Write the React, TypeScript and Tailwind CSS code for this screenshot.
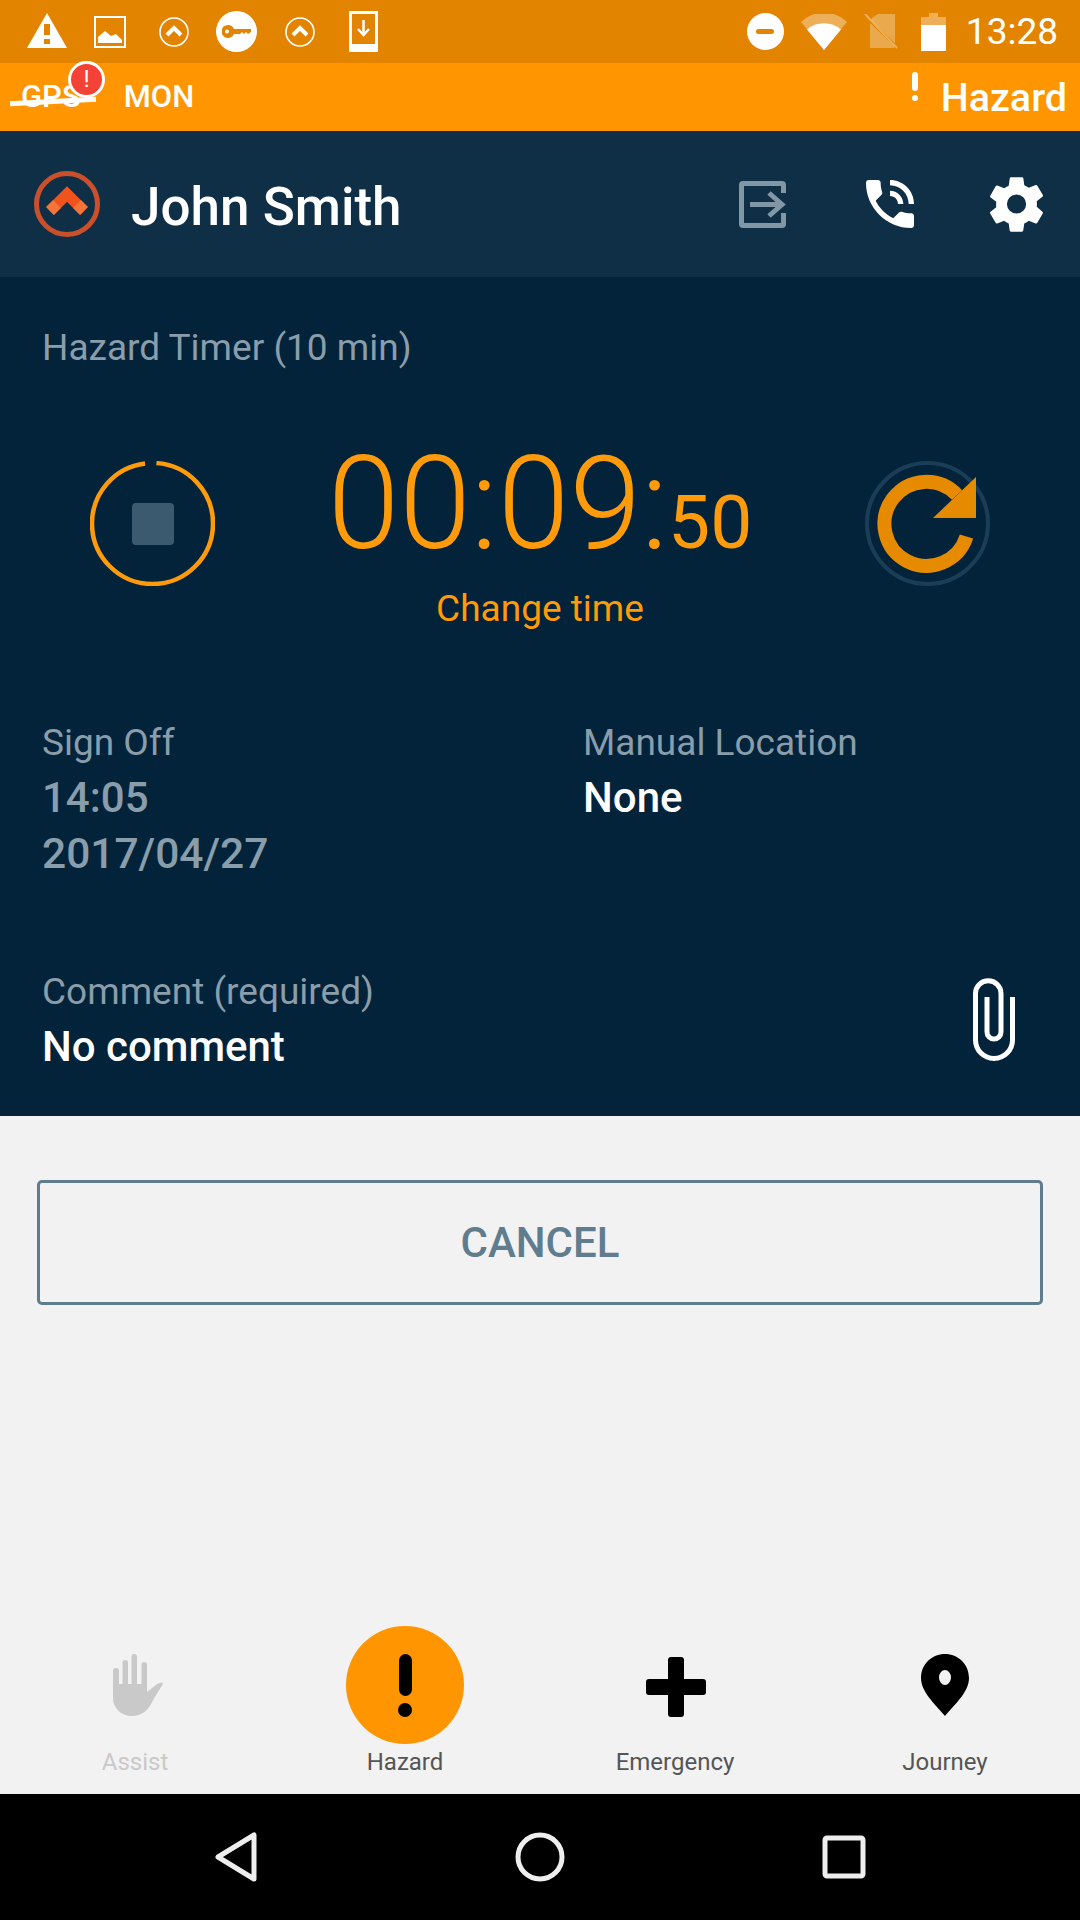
const roboto = { fontFamily: 'Roboto, "Liberation Sans", sans-serif' };

function ChevronCircle() {
  return (
    <svg width="30" height="30" viewBox="0 0 30 30" fill="none" stroke="#fff">
      <circle cx="15" cy="15" r="14" strokeWidth="1.6" />
      <path d="M8 18 L15 11 L22 18" strokeWidth="4" />
    </svg>
  );
}

function StatusBar() {
  return (
    <div className="flex h-[63px] items-center bg-[#e38400] pl-[27px] pr-[22px]">
      <svg width="40" height="36" viewBox="0 0 40 36" className="mt-[-3px]">
        <path d="M20 1 L40 36 L0 36 Z" fill="#fff" />
        <rect x="17" y="12" width="6" height="11" fill="#e38400" />
        <rect x="17" y="27" width="6" height="5" fill="#e38400" />
      </svg>
      <svg width="32" height="32" viewBox="0 0 32 32" className="ml-[27px]">
        <rect x="1" y="1" width="30" height="30" fill="none" stroke="#fff" strokeWidth="2" />
        <path d="M4 27 L4 21 L11 15 L17 20 L22 18 L28 24 L28 27 Z" fill="#fff" />
      </svg>
      <div className="ml-[33px] flex">
        <ChevronCircle />
      </div>
      <div className="ml-[27px] flex h-[41px] w-[41px] items-center justify-center rounded-full bg-white">
        <svg width="29" height="13" viewBox="0 0 29 13">
          <path d="M6 0 A6.5 6.5 0 0 1 12 4 L29 4 L29 7 L26 9 L24 7 L22 9 L20 7 L18 9 L12 9 A6.5 6.5 0 1 1 6 0 Z" fill="#e38400" />
          <circle cx="5" cy="6.5" r="2" fill="#fff" />
        </svg>
      </div>
      <div className="ml-[28px] flex">
        <ChevronCircle />
      </div>
      <svg width="29" height="41" viewBox="0 0 29 41" className="ml-[34px]">
        <path d="M0 0 H29 V41 H0 Z M3 3 V33 H26 V3 Z" fill="#fff" fillRule="evenodd" />
        <path d="M14.5 9 V23 M9 18 L14.5 24 L20 18" fill="none" stroke="#fff" strokeWidth="2.5" />
      </svg>

      <div className="ml-auto flex h-[37px] w-[37px] items-center justify-center rounded-full bg-white">
        <div className="h-[5px] w-[18px] rounded-sm bg-[#e38400]" />
      </div>
      <svg width="46" height="36" viewBox="0 0 46 36" className="ml-[17px]">
        <path d="M0 8 A33 33 0 0 1 46 8 L23 36 Z" fill="#fff" fillOpacity="0.35" />
        <path d="M6 15.5 A26 26 0 0 1 40 15.5 L23 36 Z" fill="#fff" />
      </svg>
      <svg width="35" height="35" viewBox="0 0 35 35" className="ml-[17px]">
        <path d="M8 4 L14 0 H31 V32 Q31 34 29 34 H6 V10 Z" fill="#fff" fillOpacity="0.3" />
        <path d="M1 2 L34 34" stroke="#e38400" strokeWidth="3" />
        <path d="M1 0 L33 34" stroke="#fff" strokeOpacity="0.35" strokeWidth="2" />
      </svg>
      <svg width="25" height="38" viewBox="0 0 25 38" className="ml-[22px]">
        <path d="M0 4 H8 V0 H17 V4 H25 V12 H0 Z" fill="#fff" fillOpacity="0.35" />
        <rect x="0" y="12" width="25" height="26" fill="#fff" />
      </svg>
      <div className="ml-[20px] text-[37px] leading-none text-white" style={roboto}>
        13:28
      </div>
    </div>
  );
}

function AlertBar() {
  return (
    <div className="flex h-[68px] items-center bg-[#ff9500] pr-[13px]">
      <div className="relative ml-[21px] mt-[-2px] text-[31px] font-medium leading-none text-white" style={roboto}>
        GPS
        <div className="absolute left-[-11px] top-[18px] h-[5px] w-[86px] -rotate-[3deg] bg-white" />
        <div className="absolute left-[47px] top-[-20px] flex h-[37px] w-[37px] items-center justify-center rounded-full border-[3px] border-white bg-[#f44336] text-[24px] font-normal">
          !
        </div>
      </div>
      <div className="ml-[43px] mt-[-2px] text-[31px] font-medium leading-none text-white" style={roboto}>
        MON
      </div>
      <div className="ml-auto mb-[22px] mr-[23px] flex flex-col items-center gap-[4px]">
        <div className="h-[19px] w-[6px] rounded-full bg-white" />
        <div className="h-[6px] w-[6px] rounded-full bg-white" />
      </div>
      <div className="mt-[2px] text-[39.5px] font-medium leading-none text-white" style={roboto}>
        Hazard
      </div>
    </div>
  );
}

function Header() {
  return (
    <div className="flex h-[146px] items-center bg-[#0f2f47] pl-[34px] pr-[31px]">
      <svg width="66" height="66" viewBox="0 0 66 66" fill="none">
        <circle cx="33" cy="33" r="30.5" stroke="#c9502a" strokeWidth="5" />
        <path d="M16 40 L33 23 L50 40" stroke="#f0531c" strokeWidth="11" />
        <path d="M16 40 L23 33 M50 40 L43 33" stroke="#f4743a" strokeWidth="11" />
      </svg>
      <div className="ml-[31px] mt-[7px] text-[53px] font-medium leading-none text-white" style={roboto}>
        John Smith
      </div>
      <svg width="47" height="47" viewBox="0 0 47 47" fill="none" className="ml-auto">
        <path d="M44.5 12 V4 Q44.5 2.5 43 2.5 H4 Q2.5 2.5 2.5 4 V43 Q2.5 44.5 4 44.5 H43 Q44.5 44.5 44.5 43 V32" stroke="#8197a6" strokeWidth="5" />
        <path d="M11 23.5 H43 M30 12 L43 23.5 L30 35" stroke="#8197a6" strokeWidth="5" />
      </svg>
      <svg width="64" height="64" viewBox="0 0 24 24" className="ml-[72px]">
        <path
          fill="#fff"
          d="M20 15.5c-1.25 0-2.45-.2-3.57-.57-.35-.11-.74-.03-1.02.24l-2.2 2.2c-2.83-1.44-5.15-3.75-6.59-6.59l2.2-2.21c.28-.26.36-.65.25-1C8.7 6.45 8.5 5.25 8.5 4c0-.55-.45-1-1-1H4c-.55 0-1 .45-1 1 0 9.39 7.61 17 17 17 .55 0 1-.45 1-1v-3.5c0-.55-.45-1-1-1zM19 12h2c0-4.97-4.03-9-9-9v2c3.87 0 7 3.13 7 7zm-4 0h2c0-2.76-2.24-5-5-5v2c1.66 0 3 1.34 3 3z"
        />
      </svg>
      <svg width="64" height="64" viewBox="0 0 24 24" className="ml-[63px]">
        <path
          fill="#fff"
          d="M19.4 13c.04-.32.06-.66.06-1s-.02-.68-.07-1l2.16-1.68c.2-.15.25-.43.13-.65l-2.05-3.54c-.12-.23-.39-.3-.62-.23l-2.55 1.03c-.53-.41-1.1-.75-1.72-1l-.38-2.71A.5.5 0 0 0 13.86 2H9.78c-.25 0-.46.18-.5.42L8.9 5.13c-.62.25-1.2.6-1.72 1L4.63 5.1c-.23-.08-.5 0-.62.23L1.96 8.87c-.12.22-.07.5.13.65L4.25 11.2c-.05.32-.09.67-.09 1s.02.68.07 1l-2.16 1.68c-.2.15-.25.43-.13.65l2.05 3.54c.12.23.39.3.62.23l2.55-1.03c.53.41 1.1.75 1.72 1l.38 2.71c.04.24.25.42.5.42h4.08c.25 0 .46-.18.5-.42l.38-2.71c.62-.25 1.2-.6 1.72-1l2.55 1.03c.23.08.5 0 .62-.23l2.05-3.54c.12-.22.07-.5-.13-.65L19.4 13zM11.82 15.6A3.6 3.6 0 1 1 11.82 8.4a3.6 3.6 0 0 1 0 7.2z"
        />
      </svg>
    </div>
  );
}

function Timer() {
  return (
    <div className="flex items-start">
      <div className="relative ml-[90px] mt-[55px] flex h-[125px] w-[125px] shrink-0 items-center justify-center">
        <svg width="125" height="125" viewBox="0 0 125 125" fill="none" className="absolute inset-0">
          <circle cx="62.5" cy="62.5" r="60.5" stroke="#ff9a0a" strokeWidth="4.5" strokeDasharray="368 12" strokeDashoffset="-4" transform="rotate(-90 62.5 62.5)" />
        </svg>
        <div className="h-[42px] w-[42px] rounded-[4px] bg-[#3b5a70]" />
      </div>
      <div className="flex flex-1 flex-col items-center">
        <div className="mt-[34px] flex items-baseline text-[#ff9a0a]" style={roboto}>
          <span className="text-[129px] font-light leading-[128px]">00:09:</span>
          <span className="text-[75px] leading-[128px]">50</span>
        </div>
        <div className="mt-[2px] text-[37px] leading-[42px] text-[#ff9a0a]" style={roboto}>
          Change time
        </div>
      </div>
      <svg width="125" height="125" viewBox="0 0 125 125" fill="none" className="mr-[90px] mt-[55px] shrink-0">
        <circle cx="62.5" cy="62.5" r="60.5" stroke="#1a3e57" strokeWidth="4" />
        <path d="M101.5 75.5 A42 42 0 1 1 92 34" stroke="#e68a00" strokeWidth="14" />
        <path d="M111 16 L111 57 L68 57 Z" fill="#e68a00" />
      </svg>
    </div>
  );
}

function Details() {
  return (
    <div className="flex-1 bg-[#02233a] pl-[42px]" style={roboto}>
      <div className="mt-[51px] text-[37px] leading-[40px] text-[#8a9dab]">Hazard Timer (10 min)</div>
      <div className="-ml-[42px] mt-[38px]">
        <Timer />
      </div>
      <div className="mt-[90px] flex">
        <div className="w-[541px]">
          <div className="text-[37px] leading-[46px] text-[#8a9dab]">Sign Off</div>
          <div className="mt-[9px] text-[42px] font-medium leading-[46px] text-[#8a9dab]">14:05</div>
          <div className="mt-[10px] text-[42.5px] font-medium leading-[46px] text-[#8a9dab]">2017/04/27</div>
        </div>
        <div>
          <div className="text-[37px] leading-[46px] text-[#8a9dab]">Manual Location</div>
          <div className="mt-[9px] text-[42px] font-medium leading-[46px] text-white">None</div>
        </div>
      </div>
      <div className="mt-[92px] flex items-center pr-[65px]">
        <div>
          <div className="text-[37px] leading-[46px] text-[#8a9dab]">Comment (required)</div>
          <div className="mt-[9px] text-[42px] font-medium leading-[46px] text-white">No comment</div>
        </div>
        <svg width="42" height="84" viewBox="0 0 42 84" fill="none" stroke="#fff" strokeWidth="5" className="ml-auto">
          <path d="M39.5 19 V62 A18.5 18.5 0 0 1 2.5 62 V15.5 A12.75 12.75 0 0 1 28 15.5 V54 A7 7 0 0 1 14 54 V19" />
        </svg>
      </div>
    </div>
  );
}

function TabLabel({ children, muted }: { children: string; muted?: boolean }) {
  return (
    <div className={`mt-[4px] text-[24px] leading-[28px] ${muted ? 'text-[#c9c9c9]' : 'text-[#555555]'}`} style={roboto}>
      {children}
    </div>
  );
}

function Tabs() {
  return (
    <div className="grid grid-cols-4 pb-[18px]">
      <div className="flex flex-col items-center">
        <div className="flex h-[118px] items-center justify-center">
          <svg width="50" height="62" viewBox="0 0 50 62" fill="#c9c9c9" className="ml-[6px]">
            <rect x="0" y="14" width="6" height="26" rx="3" />
            <rect x="9.5" y="6" width="5.5" height="30" rx="2.75" />
            <rect x="18.5" y="0" width="5.5" height="36" rx="2.75" />
            <rect x="28.5" y="8" width="5.5" height="30" rx="2.75" />
            <path d="M0 30 H34 V38 L43 31 C46 28.5 50 28 50 30 C47 35 42 42 38 50 C34 58 27 62 19 62 C8 62 0 54 0 44 Z" />
          </svg>
        </div>
        <TabLabel muted>Assist</TabLabel>
      </div>
      <div className="flex flex-col items-center">
        <div className="flex h-[118px] w-[118px] flex-col items-center justify-center gap-[7px] rounded-full bg-[#ff9500]">
          <div className="h-[42px] w-[13px] rounded-full bg-black" />
          <div className="h-[14px] w-[14px] rounded-full bg-black" />
        </div>
        <TabLabel>Hazard</TabLabel>
      </div>
      <div className="flex flex-col items-center">
        <div className="flex h-[118px] items-center justify-center">
          <svg width="60" height="60" viewBox="0 0 60 60" fill="#000" className="ml-[2px] mt-[3px]">
            <rect x="22" y="0" width="16" height="60" rx="3" />
            <rect x="0" y="22" width="60" height="16" rx="3" />
          </svg>
        </div>
        <TabLabel>Emergency</TabLabel>
      </div>
      <div className="flex flex-col items-center">
        <div className="flex h-[118px] items-center justify-center">
          <svg width="48" height="62" viewBox="0 0 48 62">
            <path d="M24 0 C37 0 48 10 48 24 C48 38 34 50 24 62 C14 50 0 38 0 24 C0 10 11 0 24 0 Z M24 16 A6 7.5 0 1 0 24 31 A6 7.5 0 1 0 24 16 Z" fill="#000" fillRule="evenodd" />
          </svg>
        </div>
        <TabLabel>Journey</TabLabel>
      </div>
    </div>
  );
}

function NavBar() {
  return (
    <div className="flex h-[126px] items-center justify-center bg-black">
      <svg width="42" height="50" viewBox="0 0 42 50" fill="none" stroke="#eeeeee" strokeWidth="5" strokeLinejoin="round">
        <path d="M39 3 V47 L3 25 Z" />
      </svg>
      <svg width="50" height="50" viewBox="0 0 50 50" fill="none" stroke="#eeeeee" strokeWidth="5" className="ml-[258px]">
        <circle cx="25" cy="25" r="22" />
      </svg>
      <svg width="44" height="44" viewBox="0 0 44 44" fill="none" stroke="#eeeeee" strokeWidth="5" strokeLinejoin="round" className="ml-[257px]">
        <rect x="3" y="3" width="38" height="38" rx="2" />
      </svg>
    </div>
  );
}

export default function App() {
  return (
    <div className="flex h-[1920px] w-[1080px] flex-col overflow-hidden bg-[#f2f2f2]">
      <StatusBar />
      <AlertBar />
      <Header />
      <Details />
      <div className="flex h-[678px] shrink-0 flex-col bg-[#f2f2f2]">
        <div className="mx-[37px] mt-[64px] flex h-[125px] items-center justify-center rounded-[5px] border-[3px] border-[#5f7d8f] text-[42px] font-medium text-[#5f7d8f]" style={roboto}>
          CANCEL
        </div>
        <div className="mt-auto">
          <Tabs />
        </div>
      </div>
      <NavBar />
    </div>
  );
}
